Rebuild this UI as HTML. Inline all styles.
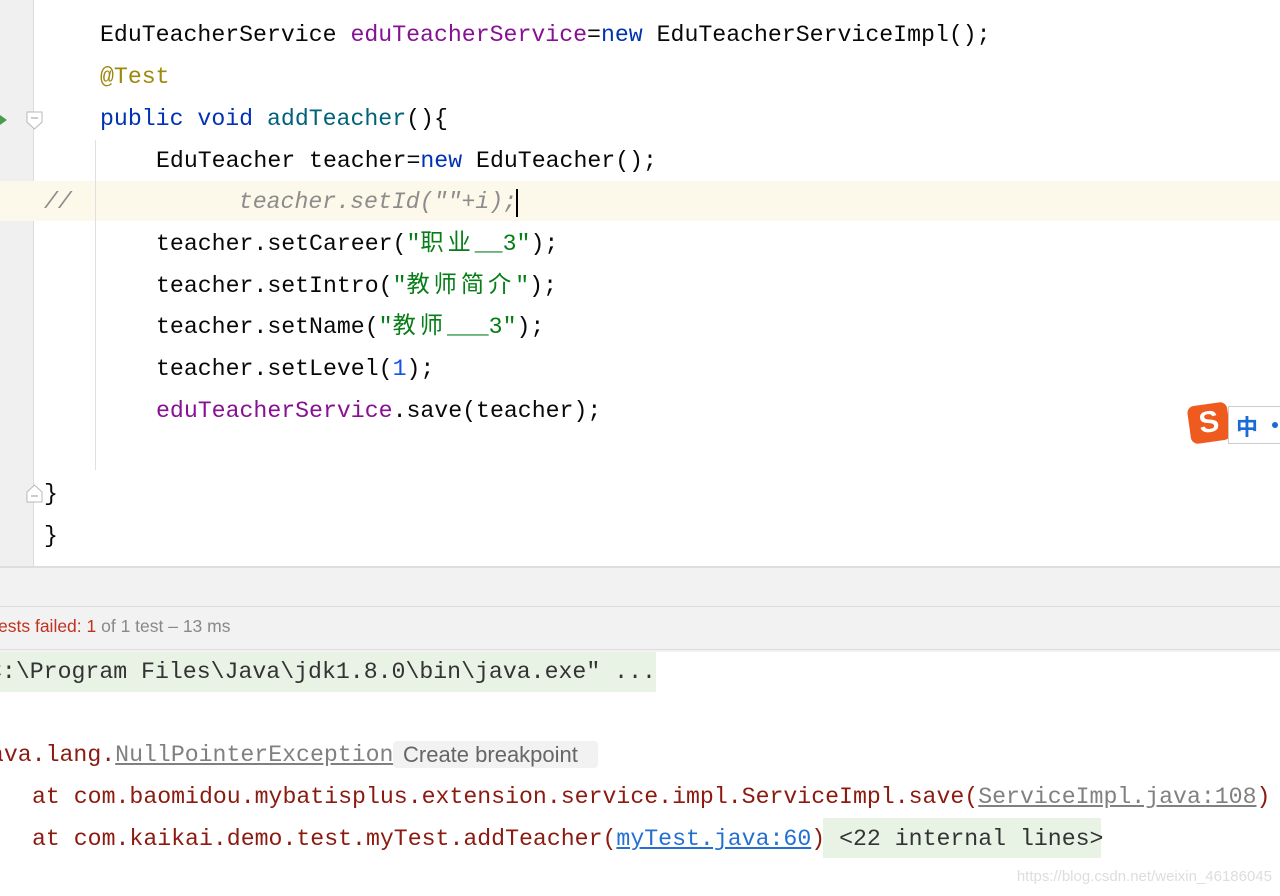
<!DOCTYPE html>
<html><head><meta charset="utf-8"><style>
body{margin:0;width:1280px;height:896px;background:#fff;position:relative;overflow:hidden;font-family:"Liberation Mono","Noto Sans CJK SC",monospace;font-size:23.2px;}
.l{position:absolute;white-space:pre;line-height:30px;height:30px;color:#080808}
.k{color:#0033b3}.p{color:#871094}.a{color:#9e880d}.f{color:#00627a}.s{color:#067d17}.n{color:#1750eb}
.c{color:#8c8c8c;font-style:italic}
.cj{letter-spacing:4px}
.r{color:#8b1a10}
.u{color:#808080;text-decoration:underline}
.lk{color:#2470d0;text-decoration:underline}
</style></head><body>
<div style="position:absolute;left:0;top:0;width:33px;height:566px;background:#f0f0f0;border-right:1px solid #dcdcdc"></div>
<div style="position:absolute;left:0;top:181px;width:1280px;height:40px;background:#fcf9ea"></div>
<div style="position:absolute;left:95px;top:140px;width:1px;height:330px;background:#e0e0e0"></div>
<svg style="position:absolute;left:0;top:112px" width="10" height="16"><path d="M0 3 L7 8 L0 13Z" fill="#4a9e4a"/></svg>
<svg style="position:absolute;left:25px;top:110px" width="20" height="22"><path d="M2 2 H17 V12 L9.5 19 L2 12Z" fill="#fff" stroke="#b8b8b8"/><path d="M6 8 H13" stroke="#999"/></svg>
<svg style="position:absolute;left:25px;top:483px" width="20" height="22"><path d="M2 19 H17 V9 L9.5 2 L2 9Z" fill="#fff" stroke="#b8b8b8"/><path d="M6 13 H13" stroke="#999"/></svg>
<div class="l" style="left:100px;top:20px">EduTeacherService <span class="p">eduTeacherService</span>=<span class="k">new</span> EduTeacherServiceImpl();</div>
<div class="l a" style="left:100px;top:62px">@Test</div>
<div class="l" style="left:100px;top:104px"><span class="k">public void</span> <span class="f">addTeacher</span>(){</div>
<div class="l" style="left:156px;top:146px">EduTeacher teacher=<span class="k">new</span> EduTeacher();</div>
<div class="l c" style="left:44px;top:187px">//            teacher.setId(""+i);</div>
<div style="position:absolute;left:516px;top:189px;width:2px;height:28px;background:#000"></div>
<div class="l" style="left:156px;top:229px">teacher.setCareer(<span class="s">"<span class="cj">职业</span>__3"</span>);</div>
<div class="l" style="left:156px;top:271px">teacher.setIntro(<span class="s">"<span class="cj">教师简介</span>"</span>);</div>
<div class="l" style="left:156px;top:312px">teacher.setName(<span class="s">"<span class="cj">教师</span>___3"</span>);</div>
<div class="l" style="left:156px;top:354px">teacher.setLevel(<span class="n">1</span>);</div>
<div class="l" style="left:156px;top:396px"><span class="p">eduTeacherService</span>.save(teacher);</div>
<div class="l" style="left:44px;top:479px">}</div>
<div class="l" style="left:44px;top:521px">}</div>
<div style="position:absolute;left:1189px;top:404px;width:40px;height:38px;background:#ef5a1e;border-radius:7px;transform:rotate(-8deg);color:#fff;font:bold 30px 'Liberation Sans',sans-serif;text-align:center;line-height:38px">S</div>
<div style="position:absolute;left:1228px;top:406px;width:60px;height:36px;border:1px solid #ccc;background:#fff"></div>
<div style="position:absolute;left:1236px;top:410px;color:#1a6ad8;font:bold 22px 'Noto Sans CJK SC',sans-serif">中</div>
<div style="position:absolute;left:1272px;top:422px;width:6px;height:6px;border-radius:3px;background:#1a6ad8"></div>
<div style="position:absolute;left:0;top:566px;width:1280px;height:84px;background:#f2f2f2;border-top:2px solid #dedede"></div>
<div style="position:absolute;left:0;top:606px;width:1280px;height:1px;background:#dcdcdc"></div>
<div style="position:absolute;left:0;top:649px;width:1280px;height:1px;background:#dcdcdc"></div>
<div style="position:absolute;left:-2px;top:616px;font:17.5px 'Liberation Sans',sans-serif;color:#888;white-space:pre"><span style="color:#c0321f">ests failed: 1</span> of 1 test – 13 ms</div>
<div style="position:absolute;left:0;top:652px;width:656px;height:40px;background:#e8f3e6"></div>
<div class="l" style="left:-12px;top:657px;color:#333">C:\Program Files\Java\jdk1.8.0\bin\java.exe" ...</div>
<div class="l r" style="left:-24px;top:740px">java.lang.<span class="u">NullPointerException</span></div>
<div style="position:absolute;left:393px;top:741px;width:205px;height:27px;background:#f2f2f2;border-radius:4px;font:22px 'Liberation Sans',sans-serif;color:#666;line-height:27px;padding-left:10px;box-sizing:border-box">Create breakpoint</div>
<div class="l r" style="left:32px;top:782px">at com.baomidou.mybatisplus.extension.service.impl.ServiceImpl.save(<span class="u">ServiceImpl.java:108</span>)</div>
<div style="position:absolute;left:823px;top:818px;width:278px;height:40px;background:#e8f3e6"></div>
<div class="l r" style="left:32px;top:824px">at com.kaikai.demo.test.myTest.addTeacher(<span class="lk">myTest.java:60</span>) <span style="color:#333">&lt;22 internal lines&gt;</span></div>
<div style="position:absolute;right:8px;top:868px;font:15px 'Liberation Sans',sans-serif;color:#ddd">https://blog.csdn.net/weixin_46186045</div>
</body></html>
